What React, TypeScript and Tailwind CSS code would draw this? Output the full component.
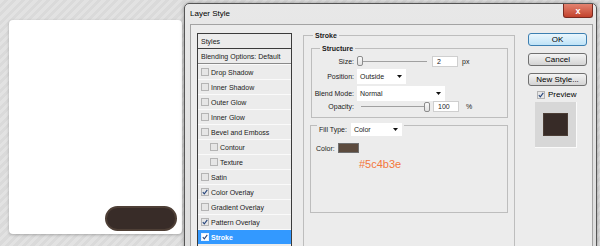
import React from 'react';

const styleItems = [
  { label: 'Drop Shadow' },
  { label: 'Inner Shadow' },
  { label: 'Outer Glow' },
  { label: 'Inner Glow' },
  { label: 'Bevel and Emboss' },
  { label: 'Contour', sub: true },
  { label: 'Texture', sub: true },
  { label: 'Satin' },
  { label: 'Color Overlay', on: true },
  { label: 'Gradient Overlay' },
  { label: 'Pattern Overlay', on: true },
  { label: 'Stroke', on: true, active: true },
];

const Check = ({ on, active }: { on?: boolean; active?: boolean }) => (
  <span
    className={`flex h-[8px] w-[8px] shrink-0 items-center justify-center border ${
      active ? 'border-[#e8f2ff] bg-white' : 'border-[#b4b4b4] bg-[#e6e6e6]'
    }`}
  >
    {on && (
      <svg width="6" height="6" viewBox="0 0 6 6">
        <path d="M0.8 3.1 L2.3 4.8 L5.3 0.9" fill="none" stroke="#27457c" strokeWidth="1.1" />
      </svg>
    )}
  </span>
);

const Arrow = () => (
  <svg width="5" height="3" viewBox="0 0 5 3">
    <path d="M0 0 H5 L2.5 3 Z" fill="#111" />
  </svg>
);

const Dropdown = ({ value, className }: { value: string; className: string }) => (
  <div className={`flex items-center justify-between bg-white pl-[3px] pr-[4px] ${className}`}>
    <span>{value}</span>
    <Arrow />
  </div>
);

const Thumb = () => (
  <span className="h-[10px] w-[6px] shrink-0 rounded-[2px] border border-[#8c8c8c] bg-gradient-to-b from-[#fafafa] to-[#e0e0e0]" />
);

const Field = ({ value }: { value: string }) => (
  <div className="flex h-[11px] w-[26px] items-center border border-[#cfcfcf] bg-white pl-[4px]">{value}</div>
);

const Label = ({ children }: { children: React.ReactNode }) => (
  <div className="w-[42px] shrink-0 text-right">{children}</div>
);

const App: React.FC = () => {
  return (
    <div className="flex h-[246px] w-[600px] overflow-hidden bg-[repeating-linear-gradient(135deg,#e2e2e2_0px,#e2e2e2_3px,#dadada_3px,#dadada_6px)] font-['Liberation_Sans',Arial,sans-serif] text-[7px] leading-[9px] text-[#1a1a1a]">
      {/* artboard */}
      <div className="w-[184px] shrink-0 pl-[9px] pt-[20px]">
        <div className="flex h-[214px] w-[173px] items-end justify-end rounded-[4px] bg-white pb-[3px] pr-[5px] shadow-[0_1px_3px_rgba(0,0,0,0.25)]">
          <div className="h-[25px] w-[72px] rounded-full border-2 border-[#4e3f36] bg-[#382c28]" />
        </div>
      </div>

      {/* dialog */}
      <div className="mt-[3px] h-[260px] w-[413px] shrink-0 rounded-t-[5px] border border-[#555] bg-gradient-to-b from-[#e8e8e8] to-[#dcdcdc] shadow-[0_0_4px_rgba(0,0,0,0.35)]">
        <div className="flex h-[20px] items-start justify-between">
          <div className="self-center pl-[5px] text-[8px] leading-[10px] text-black">Layer Style</div>
          <div className="mr-[3px] flex h-[14px] w-[30px] items-center justify-center rounded-b-[3px] border border-t-0 border-[#7a2a20] bg-gradient-to-b from-[#e3826f] to-[#c2412c] text-[9px] font-bold leading-[10px] text-white">
            x
          </div>
        </div>

        <div className="ml-[5px] flex h-[240px] w-[403px] border border-[#a3a3a3] bg-[#ececec] pl-[6px] pt-[8px]">
          {/* styles list */}
          <div className="h-[216px] w-[95px] shrink-0 border border-[#3c3c3c]">
            <div className="flex h-[15px] items-center border-b border-[#3c3c3c] pl-[3px]">Styles</div>
            <div className="flex h-[15px] items-center border-b border-[#8a8a8a] pl-[3px]">Blending Options: Default</div>
            {styleItems.map((s) => (
              <div
                key={s.label}
                className={`flex h-[15px] items-center gap-[2px] border-t border-[#fafafa] ${s.sub ? 'pl-[12px]' : 'pl-[3px]'} ${
                  s.active ? 'bg-[#3399ff] font-bold text-white' : ''
                }`}
              >
                <Check on={s.on} active={s.active} />
                <span>{s.label}</span>
              </div>
            ))}
          </div>

          {/* stroke group */}
          <div className="ml-[11px] mt-[2px] h-[220px] w-[212px] shrink-0 border border-[#bdbdbd]">
            <div className="-mt-[5px] ml-[9px] w-fit bg-[#ececec] px-[2px] font-bold">Stroke</div>

            <div className="ml-[7px] mt-[8px] w-[197px] border border-[#bdbdbd] pb-[5px]">
              <div className="-mt-[5px] ml-[8px] w-fit bg-[#ececec] px-[2px] font-bold">Structure</div>
              <div className="mt-[2px] flex h-[12px] items-center gap-[3px]">
                <Label>Size:</Label>
                <div className="flex w-[70px] items-center">
                  <Thumb />
                  <span className="h-px flex-1 bg-[#a0a0a0]" />
                </div>
                <div className="ml-[2px]">
                  <Field value="2" />
                </div>
                <span className="ml-[1px]">px</span>
              </div>
              <div className="mt-[1px] flex h-[16px] items-center gap-[3px]">
                <Label>Position:</Label>
                <Dropdown value="Outside" className="h-[15px] w-[49px]" />
              </div>
              <div className="mt-[1px] flex h-[16px] items-center gap-[3px]">
                <Label>Blend Mode:</Label>
                <Dropdown value="Normal" className="h-[15px] w-[88px]" />
              </div>
              <div className="flex h-[11px] items-center gap-[3px]">
                <Label>Opacity:</Label>
                <div className="ml-[4px] flex w-[69px] items-center">
                  <span className="h-px flex-1 bg-[#a0a0a0]" />
                  <Thumb />
                </div>
                <div className="ml-[0px]">
                  <Field value="100" />
                </div>
                <span className="ml-[4px]">%</span>
              </div>
            </div>

            <div className="ml-[6px] mt-[7px] h-[88px] w-[198px] border border-[#bdbdbd]">
              <div className="-mt-[3px] ml-[6px] flex w-fit items-center gap-[4px] bg-[#ececec] px-[2px]">
                <span>Fill Type:</span>
                <Dropdown value="Color" className="h-[13px] w-[51px]" />
              </div>
              <div className="mt-[7px] flex h-[10px] items-center gap-[3px] pl-[5px]">
                <span>Color:</span>
                <span className="h-[10px] w-[21px] border border-[#6f6f6f] bg-[#5c4b3e]" />
              </div>
              <div className="ml-[48px] mt-[5px] text-[11px] leading-[12px] text-[#f3773c]">#5c4b3e</div>
            </div>
          </div>

          {/* buttons */}
          <div className="ml-[13px] flex w-[59px] shrink-0 flex-col text-[8px] leading-[10px] text-black">
            <div className="flex h-[13px] items-center justify-center rounded-[3px] border border-[#3c7fb1] bg-gradient-to-b from-[#eaf6fd] to-[#bfe3f7]">
              OK
            </div>
            <div className="mt-[7px] flex h-[13px] items-center justify-center rounded-[3px] border border-[#707070] bg-gradient-to-b from-[#f4f4f4] to-[#d4d4d4]">
              Cancel
            </div>
            <div className="mt-[7px] flex h-[13px] items-center justify-center rounded-[3px] border border-[#707070] bg-gradient-to-b from-[#f4f4f4] to-[#d4d4d4]">
              New Style...
            </div>
            <div className="ml-[9px] mt-[4px] flex h-[9px] items-center gap-[3px]">
              <Check on />
              <span>Preview</span>
            </div>
            <div className="ml-[7px] mt-[3px] flex h-[46px] w-[42px] items-center justify-center border-b border-r border-[#fafafa] bg-[#d7d7d7]">
              <div className="h-[23px] w-[25px] border border-[#4b3d35] bg-[#372b27]" />
            </div>
          </div>
        </div>
      </div>
    </div>
  );
};

export default App;
